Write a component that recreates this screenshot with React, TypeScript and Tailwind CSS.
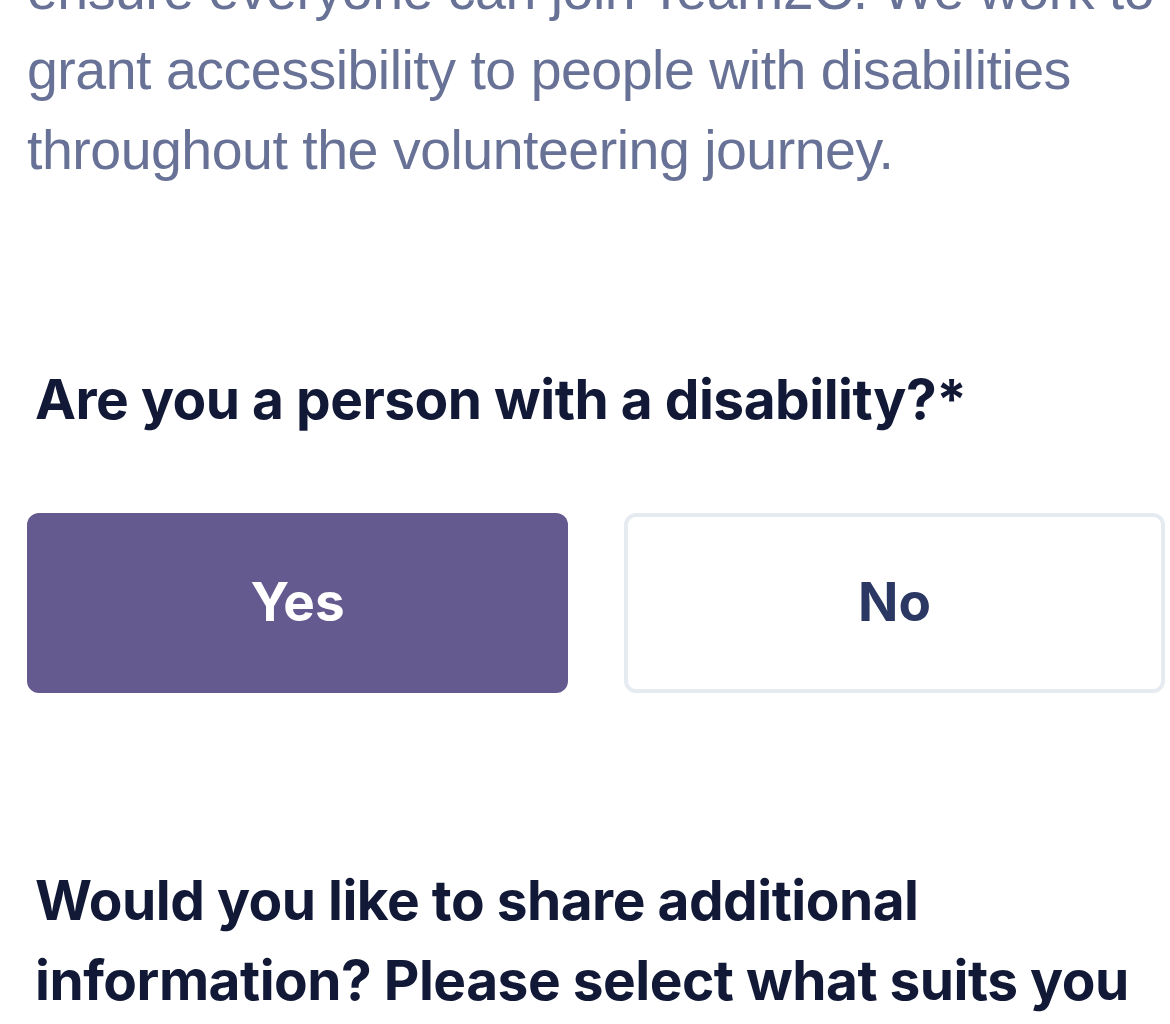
export default function App() {
  return (
    <div className="min-h-screen w-[1170px] overflow-hidden bg-white">
      <main className="pl-[27px] pr-[5px]">
        {/* Intro text */}
        <p className="-mt-[50px] text-[55.5px] leading-[80px] text-[#687196] font-['Liberation_Sans',Arial,sans-serif] tracking-[-0.5px]">
          ensure everyone can join Team2C. We work to grant accessibility to people with disabilities throughout the volunteering journey.
        </p>

        {/* Question */}
        <h2 className="mt-[169px] ml-2 text-[55px] leading-[80px] font-bold text-[#111936] font-['Inter',sans-serif] tracking-[-0.5px]">
          Are you a person with a disability?*
        </h2>

        <div className="mt-[74px] grid grid-cols-2 gap-[56px]">
          <button className="h-[180px] rounded-[12px] bg-[#655a8f] text-white text-[53px] font-bold font-['Inter',sans-serif]">
            Yes
          </button>
          <button className="h-[180px] rounded-[12px] border-4 border-[#e6eaf1] bg-white text-[#2b3863] text-[53px] font-bold font-['Inter',sans-serif]">
            No
          </button>
        </div>

        {/* Follow-up question */}
        <h2 className="mt-[167px] ml-2 text-[55px] leading-[80px] font-bold text-[#111936] font-['Inter',sans-serif] tracking-[-0.5px]">
          Would you like to share additional information? Please select what suits you
        </h2>
      </main>
    </div>
  );
}
